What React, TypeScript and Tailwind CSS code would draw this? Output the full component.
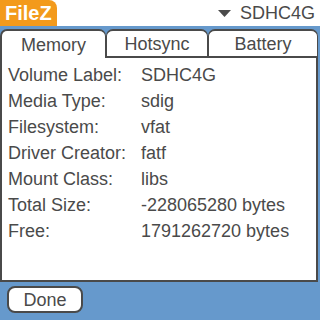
const rows: [string, string][] = [
  ["Volume Label:", "SDHC4G"],
  ["Media Type:", "sdig"],
  ["Filesystem:", "vfat"],
  ["Driver Creator:", "fatf"],
  ["Mount Class:", "libs"],
  ["Total Size:", "-228065280 bytes"],
  ["Free:", "1791262720 bytes"],
]

const tabs = [
  { label: "Memory", w: "w-[106px]", active: true },
  { label: "Hotsync", w: "w-[102px]", active: false },
  { label: "Battery", w: "w-[110px]", active: false },
]

export default function App() {
  return (
    <div
      className="w-[320px] h-[320px] bg-[#6699cc] flex flex-col text-[#4a4a4a] text-[18px] overflow-hidden"
      style={{ fontFamily: '"Liberation Sans", Arial, sans-serif' }}
    >
      {/* title bar */}
      <div className="h-[26px] bg-white flex items-stretch justify-between">
        <div className="w-[57px] bg-[#f39a1c] rounded-tr-[8px] text-white font-bold text-[20px] leading-[26px] pl-[5px]">
          FileZ
        </div>
        <div className="flex items-center gap-[9px] pr-[5px]">
          <svg width="13" height="7" viewBox="0 0 13 7">
            <polygon points="0,0 13,0 6.5,7" fill="#4a4a4a" />
          </svg>
          <span className="leading-[26px]">SDHC4G</span>
        </div>
      </div>

      {/* tabs */}
      <div className="mt-[3px] flex h-[29px]">
        {tabs.map((t) => (
          <div
            key={t.label}
            className={`${t.w} bg-white rounded-t-[7px] border-t-2 border-x border-[#4a4a4a] flex items-center justify-center leading-none ${
              t.active ? "border-l-2" : "border-b-2"
            }`}
          >
            {t.label}
          </div>
        ))}
        <div className="flex-1" />
      </div>

      {/* panel */}
      <div className="w-[318px] h-[224px] bg-white border-l-2 border-r-2 border-b-2 border-[#4a4a4a] pt-[4px] pl-[6px]">
        {rows.map(([k, v]) => (
          <div key={k} className="flex leading-[26px] h-[26px]">
            <span className="w-[133px] shrink-0">{k}</span>
            <span>{v}</span>
          </div>
        ))}
      </div>

      {/* bottom bar */}
      <div className="flex-1 pl-[7px] pt-[4px]">
        <button className="w-[76px] h-[27px] bg-white border-2 border-[#4a4a4a] rounded-[8px] text-[18px] leading-none text-[#4a4a4a]">
          Done
        </button>
      </div>
    </div>
  )
}
